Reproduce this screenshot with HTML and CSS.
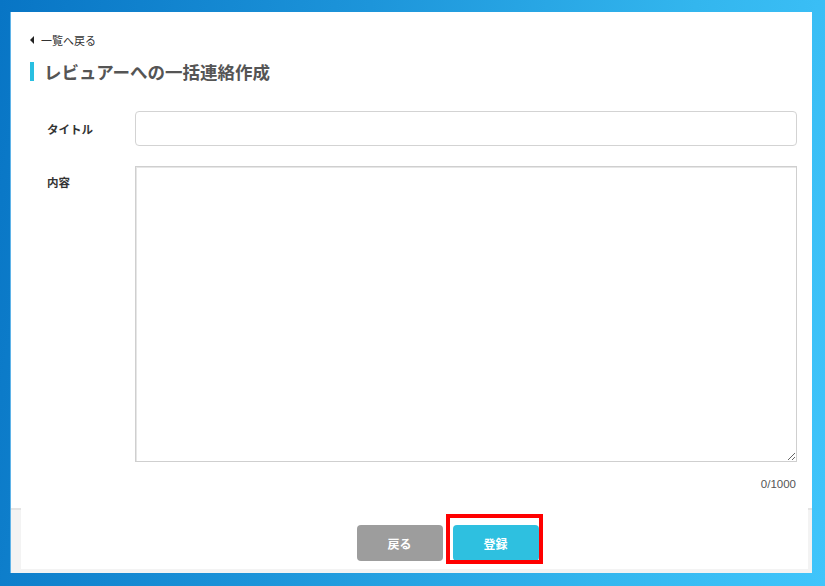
FILE: index.html
```html
<!DOCTYPE html>
<html lang="ja">
<head>
<meta charset="utf-8">
<title>レビュアーへの一括連絡作成</title>
<link rel="stylesheet" href="styles.css">
</head>
<body>
<div class="panel">
  <div class="content">
    <a class="back" href="#"><span class="tri"></span>一覧へ戻る</a>
    <h1 class="title">レビュアーへの一括連絡作成</h1>
    <div class="row">
      <label class="label">タイトル</label>
      <input class="input" type="text">
    </div>
    <div class="row row-area">
      <label class="label">内容</label>
      <textarea class="area"></textarea>
    </div>
    <div class="count">0/1000</div>
  </div>
  <div class="footer">
    <div class="footer-inner">
      <button class="btn btn-back">戻る</button>
      <button class="btn btn-save">登録</button>
    </div>
  </div>
</div>
<div class="mark"></div>
</body>
</html>
```
FILE: styles.css
```css
* { box-sizing: border-box; }
html, body { margin: 0; height: 100%; }
body {
  width: 825px;
  height: 586px;
  overflow: hidden;
  background: linear-gradient(100deg, #0875c5 0%, #1d95da 40%, #33b6ee 75%, #40c5fb 100%);
  padding: 12px 13px 13px 10px;
  font-family: "Noto Sans CJK JP", "Noto Sans", sans-serif;
  color: #333;
  position: relative;
}
.panel {
  background: #fff;
  height: 561px;
  display: flex;
  flex-direction: column;
  border-left: 1px solid #5fb3e8;
}
.content {
  flex: 1;
  padding: 19px 15px 0 19px;
  display: flex;
  flex-direction: column;
}
.back {
  display: flex;
  align-items: center;
  font-size: 11px;
  color: #333;
  text-decoration: none;
  line-height: 18px;
}
.tri {
  width: 0; height: 0;
  border-top: 4px solid transparent;
  border-bottom: 4px solid transparent;
  border-right: 4px solid #222;
  margin: 0 7px 0 0;
}
.title {
  margin: 13px 0 0 0;
  border-left: 4px solid #29bfe1;
  padding-left: 10px;
  font-size: 17.5px;
  line-height: 19px;
  font-weight: bold;
  color: #555;
}
.row {
  display: flex;
  align-items: center;
  margin-top: 30px;
}
.label {
  width: 105px;
  padding-left: 17px;
  font-size: 11.5px;
  font-weight: bold;
  color: #333;
  flex: none;
}
.input {
  flex: 1;
  height: 35px;
  border: 1px solid #d3d3d3;
  border-radius: 4px;
  background: #fff;
  font: inherit;
}
.row-area {
  margin-top: 20px;
  align-items: flex-start;
}
.row-area .label { padding-top: 8px; }
.area {
  flex: 1;
  height: 296px;
  border: 1px solid #cfcfcf;
  box-shadow: inset 1px 1px 0 #e6e6e6;
  border-radius: 0;
  resize: both;
  font: inherit;
}
.count {
  text-align: right;
  font-size: 11.5px;
  color: #555;
  margin-top: 16px;
  padding-right: 1px;
  font-family: "Liberation Sans", "Noto Sans", sans-serif;
}
.footer {
  height: 65px;
  background: #f3f3f3;
  padding: 0 4px 2px 10px;
  border-top: 2px solid #e4e4e4;
}
.footer-inner {
  background: #fff;
  height: 100%;
  margin-top: -2px;
  display: flex;
  justify-content: center;
  align-items: flex-start;
  gap: 10px;
  padding: 17px 0 0 66px;
}
.btn {
  width: 86px;
  height: 36px;
  border: none;
  border-radius: 4px;
  color: #fff;
  font-family: inherit;
  font-size: 12px;
  font-weight: bold;
}
.btn-back { background: #9d9d9d; }
.btn-save { background: #2ec0e0; }
.mark {
  position: absolute;
  left: 446px;
  top: 514px;
  width: 97px;
  height: 50px;
  border: 4px solid #f00;
}
```
